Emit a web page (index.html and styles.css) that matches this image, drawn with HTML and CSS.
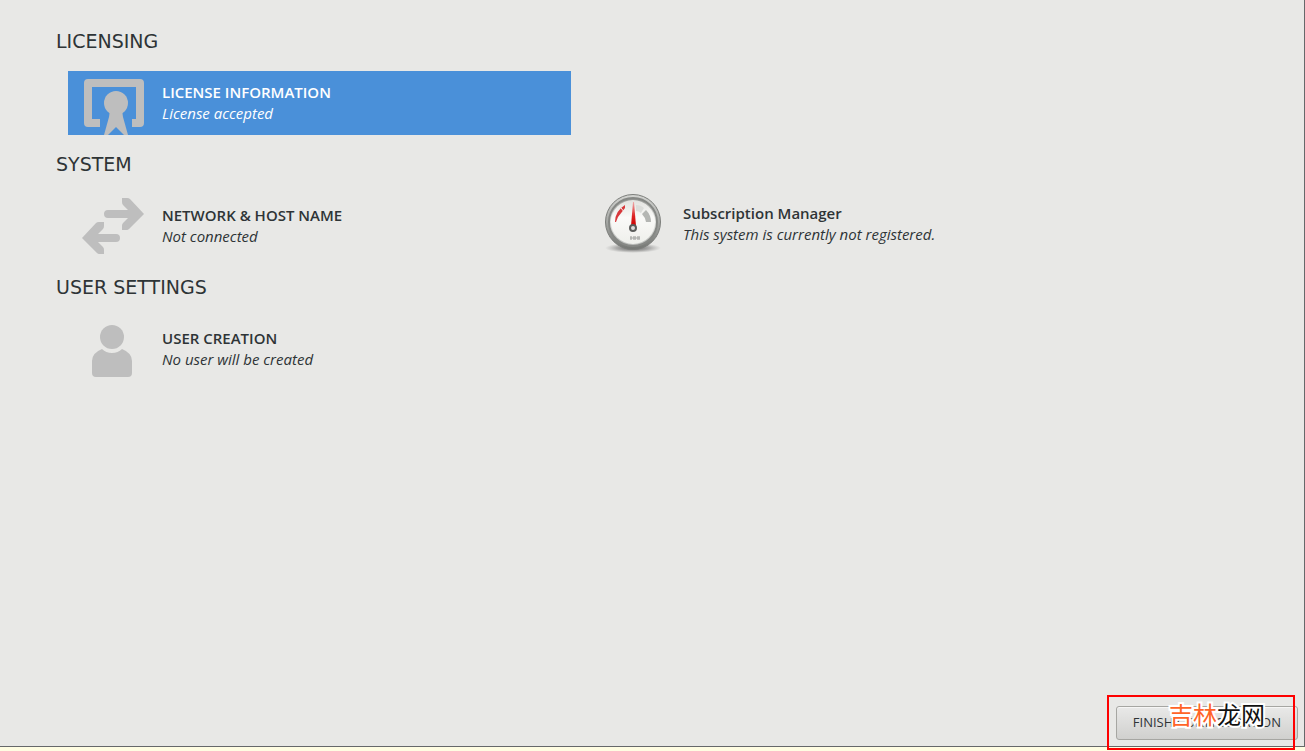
FILE: index.html
```html
<!DOCTYPE html>
<html lang="en">
<head>
<meta charset="utf-8">
<title>Initial Setup</title>
<link rel="stylesheet" href="styles.css">
</head>
<body>
<div class="window">
  <main class="hub">
    <section class="category">
      <h1 class="heading">LICENSING</h1>
      <div class="spokes">
        <button class="spoke selected" type="button">
          <svg class="icon" width="64" height="64" viewBox="0 0 64 64" aria-hidden="true">
            <path d="M8 8H60a4 4 0 0 1 4 4V52a4 4 0 0 1-4 4H52V48h4V16H12V48h8v8H8a4 4 0 0 1-4-4V12a4 4 0 0 1 4-4Z"/>
            <circle cx="36" cy="32" r="12"/>
            <path d="M30 39H42L43 46L48 64H44L36 56L28 64H24L29 46Z"/>
          </svg>
          <span class="text"><span class="title">LICENSE INFORMATION</span><span class="status">License accepted</span></span>
        </button>
      </div>
    </section>
    <section class="category">
      <h1 class="heading">SYSTEM</h1>
      <div class="spokes">
        <button class="spoke" type="button">
          <svg class="icon" width="64" height="64" viewBox="0 0 64 64" aria-hidden="true">
            <path d="M42 4h5q2 0 3 1L64 20L49 35q-1 1-2 1h-5v-4q0-2 1-3l5-5H28a4 4 0 0 1 0-8H48l-5-5q-1-1-1-3Z"/>
            <path d="M24 28h-5q-2 0-3 1L2 44L17 59q1 1 2 1h5v-4q0-2-1-3l-5-5H36a4 4 0 0 0 0-8H18l5-5q1-1 1-3Z"/>
          </svg>
          <span class="text"><span class="title">NETWORK &amp; HOST NAME</span><span class="status">Not connected</span></span>
        </button>
        <button class="spoke" type="button">
          <svg class="icon" width="64" height="60" viewBox="0 0 64 60" aria-hidden="true">
            <defs>
              <linearGradient id="rim" x1="0" y1="0" x2="0" y2="1"><stop offset="0" stop-color="#d4d5d2"/><stop offset=".5" stop-color="#a5a7a4"/><stop offset="1" stop-color="#747673"/></linearGradient>
              <linearGradient id="bevel" x1="0" y1="0" x2="0" y2="1"><stop offset="0" stop-color="#8f918e"/><stop offset=".45" stop-color="#e7e8e5"/><stop offset="1" stop-color="#b9bbb8"/></linearGradient>
              <linearGradient id="face" x1="0" y1="0" x2="0" y2="1"><stop offset="0" stop-color="#e2e2df"/><stop offset=".4" stop-color="#fafaf8"/><stop offset="1" stop-color="#eeefeb"/></linearGradient>
              <linearGradient id="needle" x1="0" y1="0" x2="0" y2="1"><stop offset="0" stop-color="#eaa"/><stop offset=".6" stop-color="#d22"/><stop offset="1" stop-color="#c00"/></linearGradient>
              <radialGradient id="shadow"><stop offset="0" stop-color="#333" stop-opacity=".8"/><stop offset=".6" stop-color="#555" stop-opacity=".4"/><stop offset="1" stop-color="#777" stop-opacity="0"/></radialGradient>
            </defs>
            <ellipse cx="32" cy="54" rx="28" ry="5" fill="url(#shadow)"/>
            <circle cx="32" cy="28" r="27.5" fill="url(#rim)" stroke="#7c7e7b"/>
            <circle cx="32" cy="28" r="24" fill="url(#bevel)" stroke="#868885" stroke-width="2"/>
            <circle cx="32" cy="28" r="22" fill="url(#face)"/>
            <path d="M14 28Q14 17 24 11V14L17 23L15 28Z" fill="#d8383b"/>
            <path d="M20 14l4 5" stroke="#f3f3f0" stroke-width="1"/>
            <path d="M35 11Q40 11 43 14L40 19Q38 17 35 17Z" fill="#dcddda"/>
            <path d="M45 16Q50 21 50 28H45Q44 23 41 20Z" fill="#b4b6b3"/>
            <path d="M32 8h1L35 32H30Z" fill="url(#needle)"/>
            <circle cx="32" cy="34" r="3" fill="#ddd" stroke="#5b5d5b" stroke-width="2"/>
            <path d="M29 42h2v4h-2zM32 42h3v4h-3zM36 42h3v4h-3z" fill="#c4c5c2"/>
            <path d="M29 44h10" stroke="#a4a6a3"/>
          </svg>
          <span class="text"><span class="title">Subscription Manager</span><span class="status">This system is currently not registered.</span></span>
        </button>
      </div>
    </section>
    <section class="category">
      <h1 class="heading">USER SETTINGS</h1>
      <div class="spokes">
        <button class="spoke" type="button">
          <svg class="icon" width="64" height="64" viewBox="0 0 64 64" aria-hidden="true">
            <circle cx="32" cy="20" r="12"/>
            <path d="M22 32Q26 36 32 36T42 32Q52 36 52 44V56a4 4 0 0 1-4 4H16a4 4 0 0 1-4-4V44Q12 36 22 32Z"/>
          </svg>
          <span class="text"><span class="title">USER CREATION</span><span class="status">No user will be created</span></span>
        </button>
      </div>
    </section>
  </main>
  <footer class="actions">
    <button class="finish" type="button">FINISH CONFIGURATION</button>
  </footer>
</div>
<div class="highlight"></div>
<div class="watermark" lang="zh-CN"><span class="warm">吉林</span>龙网</div>
</body>
</html>
```

FILE: styles.css
```css
* { box-sizing: border-box; }

body {
  margin: 0;
  min-height: 100vh;
  display: flex;
  flex-direction: column;
  position: relative;
  padding-bottom: 4px;
  background: #fffde2;
  color: #2e3436;
  font-family: "Noto Sans", "Open Sans", sans-serif;
}

.window {
  flex: 1;
  display: flex;
  flex-direction: column;
  background: #e8e8e6;
  border: solid #66686a;
  border-width: 0 1px 1px 0;
}

.hub {
  flex: 1;
  display: flex;
  flex-direction: column;
  gap: 17px;
  padding: 29px 56px;
}

.heading {
  margin: 0 0 18px;
  font: 400 19px/24px "DejaVu Sans", sans-serif;
}

.spokes {
  display: grid;
  grid-template-columns: repeat(2, minmax(0, 503px));
  align-items: start;
  gap: 18px;
  padding-left: 12px;
}

.spoke {
  display: flex;
  align-items: center;
  gap: 18px;
  padding: 0 12px;
  border: 0;
  background: transparent;
  color: inherit;
  font: 400 15px/21px "Open Sans", sans-serif;
  text-align: left;
}

.selected {
  background: #4a90d9;
  color: #fff;
}

.icon {
  flex: none;
  fill: #bebebe;
}

.text {
  display: flex;
  flex-direction: column;
}

.title { font-weight: 600; }

.status { font-style: italic; }

.actions {
  display: flex;
  justify-content: flex-end;
  padding: 0 6px 6px;
}

.finish {
  height: 34px;
  padding: 0 16px 2px;
  border: 1px solid #a6a6a2;
  border-radius: 3px;
  background: linear-gradient(#e9e9e8, #d0d0ce);
  box-shadow: inset 0 1px #f6f6f5;
  color: #2e3436;
  font: 400 13px/20px "Open Sans", sans-serif;
}

.highlight {
  position: absolute;
  right: 10px;
  bottom: 1px;
  width: 188px;
  height: 55px;
  border: 2px solid #fe0000;
  pointer-events: none;
}

.watermark {
  position: absolute;
  right: 40px;
  bottom: 21px;
  color: #111;
  font: 400 24px/32px "Noto Sans CJK SC", sans-serif;
  -webkit-text-stroke: 4px #fff;
  paint-order: stroke fill;
  pointer-events: none;
}

.warm { color: #ff6428; }
```
